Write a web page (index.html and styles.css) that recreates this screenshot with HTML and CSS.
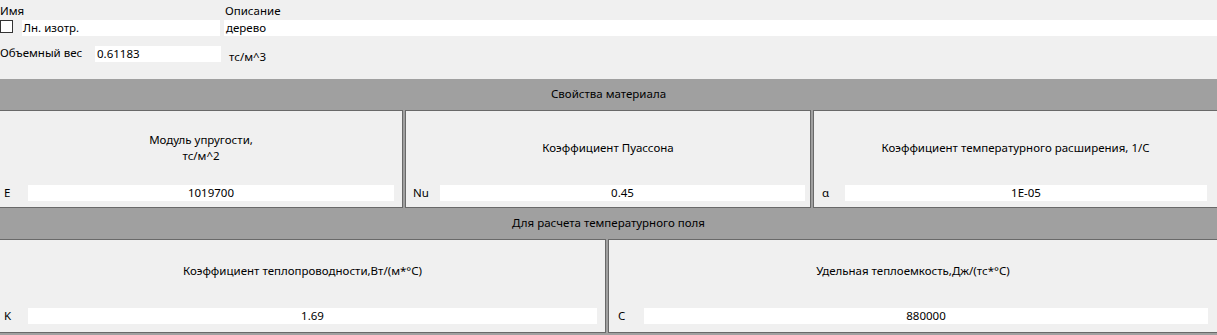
FILE: index.html
```html
<!DOCTYPE html>
<html lang="ru">
<head>
<meta charset="utf-8">
<title>Материал</title>
<link rel="stylesheet" href="styles.css">
</head>
<body>
<div class="top">
  <div class="row row-labels">
    <span class="lbl-name">Имя</span>
    <span class="lbl-desc">Описание</span>
  </div>
  <div class="row row-fields">
    <span class="checkbox"></span>
    <div class="field field-name">Лн. изотр.</div>
    <div class="field field-desc">дерево</div>
  </div>
  <div class="row row-weight">
    <span class="lbl-weight">Объемный вес</span>
    <div class="field field-weight">0.61183</div>
    <span class="unit">тс/м^3</span>
  </div>
</div>

<div class="section section-1">
  <div class="section-title">Свойства материала</div>
  <div class="cells cells-3">
    <div class="cell c1">
      <div class="cell-title">Модуль упругости,<br>тс/м^2</div>
      <div class="cell-row"><span class="cell-lbl">E</span><div class="field num">1019700</div></div>
    </div>
    <div class="cell c2">
      <div class="cell-title">Коэффициент Пуассона</div>
      <div class="cell-row"><span class="cell-lbl">Nu</span><div class="field num">0.45</div></div>
    </div>
    <div class="cell c3">
      <div class="cell-title">Коэффициент температурного расширения, 1/C</div>
      <div class="cell-row"><span class="cell-lbl">α</span><div class="field num">1E-05</div></div>
    </div>
  </div>
</div>

<div class="section section-2">
  <div class="section-title">Для расчета температурного поля</div>
  <div class="cells cells-2">
    <div class="cell c1">
      <div class="cell-title">Коэффициент теплопроводности,Вт/(м*°С)</div>
      <div class="cell-row"><span class="cell-lbl">K</span><div class="field num">1.69</div></div>
    </div>
    <div class="cell c4">
      <div class="cell-title">Удельная теплоемкость,Дж/(тс*°С)</div>
      <div class="cell-row"><span class="cell-lbl">C</span><div class="field num">880000</div></div>
    </div>
  </div>
</div>
</body>
</html>
```

FILE: styles.css
```css
* { box-sizing: border-box; }

html, body {
  margin: 0;
  padding: 0;
}

body {
  width: 1217px;
  height: 335px;
  overflow: hidden;
  background: #a0a0a0;
  font-family: "Segoe UI", "Noto Sans", "Liberation Sans", sans-serif;
  font-size: 11.5px;
  line-height: 16px;
  color: #000;
}

.top {
  height: 79px;
  background: #f0f0f0;
}

.row {
  display: flex;
  align-items: center;
}

.row-labels {
  padding-top: 3px;
  height: 20px;
  align-items: flex-start;
}

.lbl-name { width: 225px; }

.row-fields { height: 16px; }

.checkbox {
  width: 13px;
  height: 13px;
  border: 1px solid #333;
  background: #fff;
  align-self: flex-start;
}

.field {
  background: #fff;
  height: 16px;
  line-height: 16px;
  white-space: nowrap;
  overflow: hidden;
}

.field-name {
  margin-left: 9px;
  width: 198px;
  padding-left: 1px;
}

.field-desc {
  margin-left: 4px;
  flex: 1;
  padding-left: 2px;
}

.row-weight {
  margin-top: 10px;
  height: 16px;
}

.lbl-weight {
  width: 95px;
  position: relative;
  top: -1px;
}

.field-weight {
  width: 126px;
  padding-left: 2px;
}

.unit {
  margin-left: 8px;
  position: relative;
  top: 3px;
}

.section-title {
  height: 31px;
  display: flex;
  align-items: center;
  justify-content: center;
  padding-bottom: 1px;
}

.cells {
  display: grid;
  column-gap: 2px;
}

.cells-3 { grid-template-columns: 403px 406px 1fr; }
.cells-2 { grid-template-columns: 606px 1fr; }

.cell {
  background: #f0f0f0;
  border: 1px solid #696969;
  display: flex;
  flex-direction: column;
}

.c1 { border-left: none; }
.c3, .c4 { border-right: none; }

.section-1 .cell { height: 98px; padding-bottom: 6px; }
.section-2 .cell { height: 94px; padding-bottom: 8px; }
.section-2 .cell-title { padding-bottom: 6px; }

.cell-title {
  flex: 1;
  display: flex;
  align-items: center;
  justify-content: center;
  text-align: center;
}

.cell-row {
  display: flex;
  align-items: center;
  height: 16px;
}

.cell-lbl { flex: none; }
.num { flex: 1; text-align: center; }

.c1 .cell-row { padding-left: 4px; padding-right: 8px; }
.c1 .cell-lbl { width: 24px; }

.c2 .cell-row { padding-left: 7px; padding-right: 5px; }
.c2 .cell-lbl { width: 27px; }

.c3 .cell-row { padding-left: 8px; padding-right: 10px; }
.c3 .cell-lbl { width: 23px; }

.c4 .cell-row { padding-left: 9px; padding-right: 9px; }
.c4 .cell-lbl { width: 26px; }
```
